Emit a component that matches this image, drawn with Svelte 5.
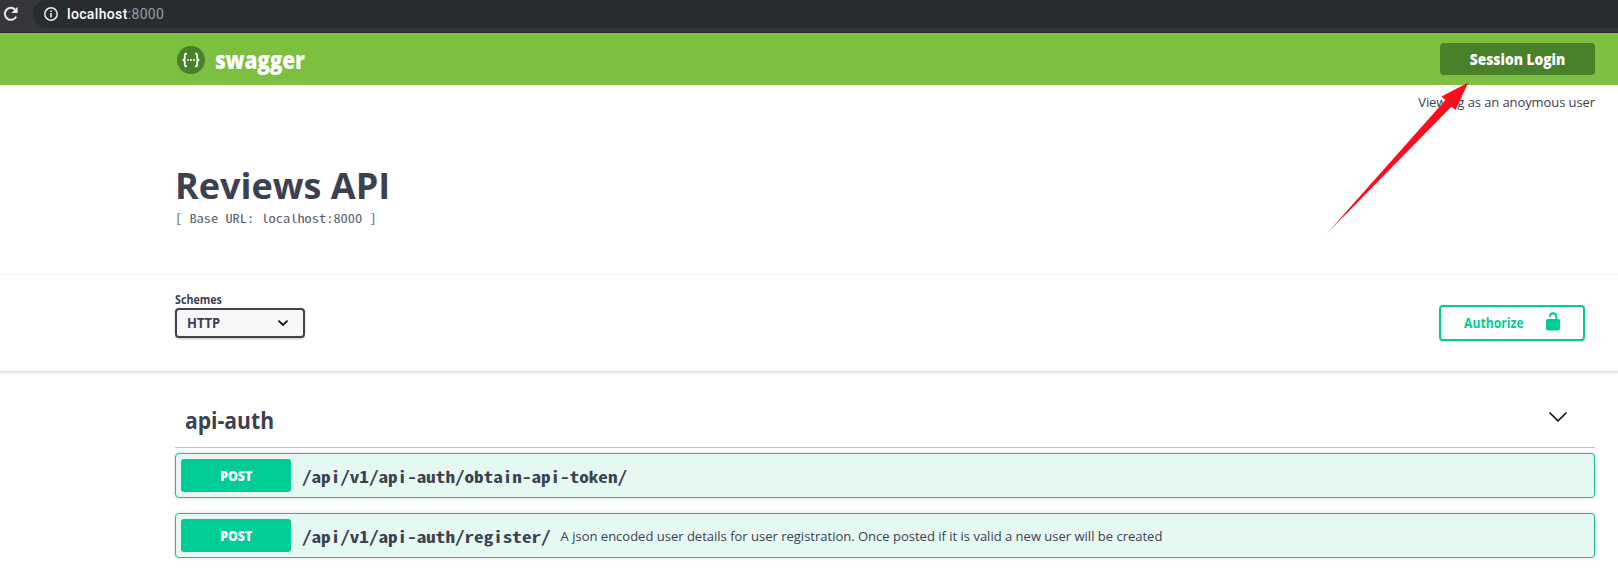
<script>
  const operations = [
    { method: 'POST', path: '/api/v1/api-auth/obtain-api-token/', summary: '' },
    {
      method: 'POST',
      path: '/api/v1/api-auth/register/',
      summary:
        'A json encoded user details for user registration. Once posted if it is valid a new user will be created'
    }
  ];
</script>

<div class="page">
  <div class="browser">
    <svg class="reload" width="16" height="16" viewBox="0 0 16 16">
      <path d="M13.2 10.6A6 6 0 1 1 12.2 3.7" fill="none" stroke="#e8eaed" stroke-width="2" />
      <path d="M14.6 0.8V7H8.4Z" fill="#e8eaed" />
    </svg>
    <div class="address">
      <svg width="16" height="16" viewBox="0 0 16 16">
        <circle cx="8" cy="8" r="6.2" fill="none" stroke="#e8eaed" stroke-width="1.5" />
        <path d="M7.2 7h1.6v4.4H7.2zM7.2 4.4h1.6V6H7.2z" fill="#e8eaed" />
      </svg>
      <span class="url"><b>localhost</b>:8000</span>
    </div>
  </div>

  <header class="topbar">
    <div class="brand">
      <svg width="28" height="28" viewBox="0 0 28 28">
        <circle cx="14" cy="14" r="14" fill="#49802a" />
        <g fill="none" stroke="#fff" stroke-width="1.8">
          <path d="M10 7.6H9.3Q7.8 7.6 7.8 9.2V12Q7.8 13.8 5.8 14Q7.8 14.2 7.8 16V18.8Q7.8 20.4 9.3 20.4H10" />
          <path d="M18 7.6H18.7Q20.2 7.6 20.2 9.2V12Q20.2 13.8 22.2 14Q20.2 14.2 20.2 16V18.8Q20.2 20.4 18.7 20.4H18" />
        </g>
        <g fill="#fff">
          <circle cx="11" cy="14" r="1" />
          <circle cx="14" cy="14" r="1" />
          <circle cx="17" cy="14" r="1" />
        </g>
      </svg>
      <span class="name">swagger</span>
    </div>
    <button class="login"><span>Session Login</span></button>
    <svg class="arrow" width="146" height="156" viewBox="0 0 146 156">
      <defs>
        <linearGradient id="fade" gradientUnits="userSpaceOnUse" x1="2" y1="153" x2="22" y2="131">
          <stop offset="0" stop-color="#ff0a1e" stop-opacity="0.4" />
          <stop offset="1" stop-color="#ff0a1e" />
        </linearGradient>
      </defs>
      <path d="M144.3 1.5L117.5 15.5L121.5 19L1 154.5L127.5 25.5L131.5 29Z" fill="url(#fade)" />
    </svg>
  </header>

  <p class="viewer">Viewing as an anoymous user</p>

  <section class="info">
    <h1>Reviews API</h1>
    <pre>[ Base URL: localhost:8000 ]</pre>
  </section>

  <section class="schemes">
    <div class="field">
      <span class="label">Schemes</span>
      <div class="select">
        <span>HTTP</span>
        <svg width="10" height="7" viewBox="0 0 10 7">
          <path d="M1 1.2L5 5L9 1.2" fill="none" stroke="#111" stroke-width="1.8" stroke-linecap="round" />
        </svg>
      </div>
    </div>
    <button class="authorize">
      <span>Authorize</span>
      <svg width="14" height="19" viewBox="0 0 14 19">
        <rect y="7" width="14" height="11.5" rx="2" fill="#00cd95" />
        <path d="M3.9 4.7Q4 1.2 7.2 1.2Q10.3 1.2 10.3 4.5V8" fill="none" stroke="#00cd95" stroke-width="2" />
      </svg>
    </button>
  </section>

  <main>
    <h2>
      <span>api-auth</span>
      <svg width="20" height="12" viewBox="0 0 20 12">
        <path d="M1.5 1.5L10 9.8L18.5 1.5" fill="none" stroke="#111" stroke-width="1.6" />
      </svg>
    </h2>
    {#each operations as op}
      <div class="op">
        <span class="method"><span>{op.method}</span></span>
        <span class="path" style="width: {op.path.length * 9.6}px"><span>{op.path}</span></span>
        {#if op.summary}<span class="summary">{op.summary}</span>{/if}
      </div>
    {/each}
  </main>
</div>

<style>
  .page {
    width: 1618px;
    height: 587px;
    overflow: hidden;
    background: #fff;
    color: #3b4151;
    font-family: "Open Sans", sans-serif;
  }
  .page * { box-sizing: border-box; }
  .browser {
    display: flex;
    height: 33px;
    background: #35363a;
    border-bottom: 1px solid #292b2c;
  }
  .reload { margin: 6px 14px 0 3px; }
  .address {
    flex: 1;
    display: flex;
    align-items: center;
    gap: 8px;
    height: 28px;
    padding-left: 10px;
    background: #282c2f;
    border-radius: 14px 0 0 14px;
  }
  .url {
    font: 14px/20px Roboto, sans-serif;
    color: #95a0a5;
    letter-spacing: 0.35px;
  }
  .url b { font-weight: 500; color: #fff; }
  .topbar {
    position: relative;
    display: flex;
    justify-content: space-between;
    align-items: center;
    height: 52px;
    padding: 0 23px 0 177px;
    background: #7dc03f;
  }
  .brand { display: flex; align-items: center; gap: 10px; margin-top: 2px; }
  .name {
    font-size: 24px;
    font-weight: 800;
    line-height: 28px;
    letter-spacing: -0.2px;
    color: #fff;
    transform: scaleX(0.87);
    transform-origin: left;
  }
  .login {
    width: 155px;
    height: 32px;
    padding: 0;
    border: 0;
    border-radius: 4px;
    background: #49802a;
    color: #fff;
    font-family: "Open Sans", sans-serif;
    font-size: 16px;
    font-weight: 800;
    line-height: 32px;
  }
  .login span { display: inline-block; transform: scaleX(0.86); }
  .arrow { position: absolute; left: 1324px; top: 48px; z-index: 1; }
  .viewer {
    margin: 0;
    height: 80px;
    padding: 8px 23px 0 0;
    text-align: right;
    font-size: 13px;
    line-height: 19px;
    letter-spacing: -0.09px;
  }
  .info { height: 110px; padding-left: 175px; border-bottom: 1px solid #f5f5f5; }
  h1 { margin: 0; font-size: 36px; line-height: 42px; font-weight: 700; }
  pre {
    width: 168px;
    margin: 2px 0 0;
    color: #5a5f6d;
    font: 12px/18px "Noto Sans Mono CJK SC", "Liberation Mono", monospace;
    transform: scaleX(1.2);
    transform-origin: left;
  }
  .schemes {
    display: flex;
    justify-content: space-between;
    height: 97px;
    padding: 17px 33px 0 175px;
    border-bottom: 1px solid #dedede;
    box-shadow: 0 1px 2px rgba(0, 0, 0, 0.12);
  }
  .field { display: flex; flex-direction: column; width: 130px; }
  .label {
    font-size: 11.5px;
    font-weight: 700;
    line-height: 16px;
    transform: scaleX(0.93);
    transform-origin: left;
  }
  .select {
    display: flex;
    justify-content: space-between;
    align-items: center;
    height: 30px;
    padding: 0 15px 0 10px;
    border: 2px solid #41444e;
    border-radius: 4px;
    background: #f7f7f7;
    box-shadow: 0 1px 2px rgba(0, 0, 0, 0.25);
    font-size: 14px;
    font-weight: 700;
    line-height: 20px;
  }
  .select span { transform: scaleX(0.93); transform-origin: left; }
  .authorize {
    display: flex;
    justify-content: space-between;
    align-items: center;
    width: 146px;
    height: 36px;
    margin-top: 13px;
    padding: 0 23px;
    border: 2px solid #00cd95;
    border-radius: 4px;
    background: #fff;
    box-shadow: 0 1px 2px rgba(0, 0, 0, 0.1);
    color: #00cd95;
    font-family: "Open Sans", sans-serif;
    font-size: 14px;
    font-weight: 700;
    line-height: 20px;
  }
  .authorize span { transform: scaleX(0.87); transform-origin: left; }
  .authorize svg { margin-top: -3px; }
  main { padding: 25px 23px 0 175px; }
  h2 {
    display: flex;
    justify-content: space-between;
    align-items: center;
    height: 51px;
    margin: 0 0 5px;
    padding: 0 27px 5px 10px;
    border-bottom: 1px solid #c1c2c4;
    font-size: 24px;
    font-weight: 700;
    line-height: 30px;
  }
  h2 span { transform: scaleX(0.88); transform-origin: left; }
  h2 svg { margin-top: -6px; }
  .op {
    display: flex;
    align-items: center;
    height: 45px;
    margin-bottom: 15px;
    padding: 0 5px;
    border: 1px solid #13c795;
    border-radius: 4px;
    background: #e5f8f2;
    box-shadow: 0 0 3px rgba(0, 0, 0, 0.19);
  }
  .method {
    width: 110px;
    height: 33px;
    border-radius: 3px;
    background: #00cd95;
    color: #fff;
    font-size: 14px;
    font-weight: 800;
    line-height: 33px;
    text-align: center;
  }
  .method span { display: inline-block; transform: scaleX(0.88); }
  .path {
    margin: 0 10px 0 11px;
    font: 700 16px/24px "Noto Sans Mono CJK SC", "Liberation Mono", monospace;
    white-space: nowrap;
  }
  .path span {
    display: inline-block;
    transform: scaleX(1.195);
    transform-origin: left;
  }
  .summary { margin-left: -1px; font-size: 13px; white-space: nowrap; }
</style>
